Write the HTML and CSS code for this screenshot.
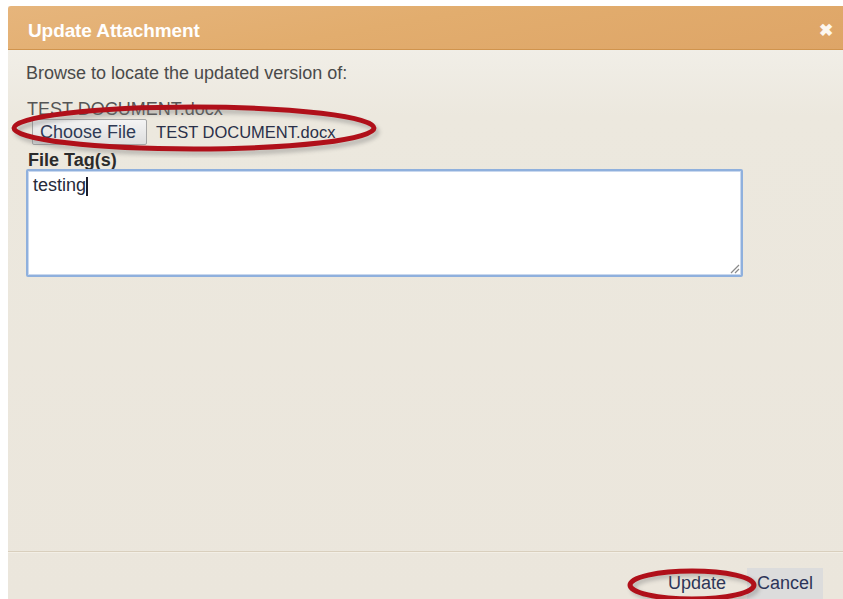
FILE: index.html
```html
<!DOCTYPE html>
<html lang="en">
<head>
<meta charset="utf-8">
<title>Update Attachment</title>
<link rel="stylesheet" href="styles.css">
</head>
<body>
<div class="dialog">
  <header class="titlebar">
    <span class="title">Update Attachment</span>
    <span class="close">&#x2716;</span>
  </header>
  <div class="content">
    <p class="intro">Browse to locate the updated version of:</p>
    <p class="current">TEST DOCUMENT.docx</p>
    <div class="file-row">
      <span class="file-btn">Choose File</span>
      <span class="file-name">TEST DOCUMENT.docx</span>
    </div>
    <div class="tag-label">File Tag(s)</div>
    <div class="textarea">
      <span class="value">testing</span><span class="caret"></span>
      <svg class="grip" width="12" height="12" viewBox="0 0 12 12">
        <path d="M11 3 L3 11 M11 7 L7 11" stroke="#8a8a8a" stroke-width="1.2" fill="none"/>
      </svg>
    </div>
  </div>
  <footer class="buttons">
    <span class="btn btn-update">Update</span>
    <span class="btn btn-cancel">Cancel</span>
  </footer>

  <!-- hand-drawn highlight rings -->
  <svg class="ring ring-file" width="390" height="64" viewBox="0 0 390 64">
    <defs><filter id="soft"><feGaussianBlur stdDeviation="2"/></filter></defs>
    <ellipse cx="188" cy="35" rx="180" ry="21" fill="none" stroke="#777" stroke-width="5" opacity="0.45" filter="url(#soft)"/>
    <ellipse cx="185" cy="31" rx="180" ry="21" fill="none" stroke="#b0101a" stroke-width="5"/>
  </svg>
  <svg class="ring ring-update" width="150" height="44" viewBox="0 0 150 44">
    <defs><filter id="soft2"><feGaussianBlur stdDeviation="2"/></filter></defs>
    <ellipse cx="70" cy="21" rx="62" ry="14" fill="none" stroke="#777" stroke-width="5" opacity="0.45" filter="url(#soft2)"/>
    <ellipse cx="67" cy="18" rx="62" ry="14" fill="none" stroke="#b0101a" stroke-width="5"/>
  </svg>
</div>
</body>
</html>
```

FILE: styles.css
```css
html, body {
  margin: 0;
  padding: 0;
  background: #ffffff;
  overflow: hidden;
}

body {
  width: 843px;
  height: 599px;
  font-family: "Liberation Sans", Arial, sans-serif;
}

.dialog {
  position: relative;
  margin: 6px 0 0 8px;
  width: 835px;
  height: 593px;
  display: flex;
  flex-direction: column;
  background: linear-gradient(to bottom, #f4f2ed 0px, #ece8de 110px, #ebe6dc 100%);
}

.titlebar {
  height: 43px;
  flex: none;
  display: flex;
  align-items: center;
  justify-content: space-between;
  padding: 0 10px 0 20px;
  background: linear-gradient(170deg, #e6b57c 0%, #e2ad6e 45%, #dea567 100%);
  border-bottom: 1px solid #d0944e;
  border-radius: 3px 0 0 0;
  color: #ffffff;
}

.title {
  font-size: 19px;
  font-weight: bold;
  letter-spacing: -0.1px;
  padding-top: 6px;
}

.close {
  font-size: 17px;
  font-weight: bold;
  color: #fdf7ef;
  padding-top: 6px;
}

.content {
  flex: 1;
  padding: 12px 0 0 18px;
  color: #4a4a4a;
}

.intro {
  margin: 0;
  font-size: 18px;
  line-height: 22px;
}

.current {
  margin: 14px 0 0 1px;
  font-size: 18px;
  line-height: 22px;
  color: #555555;
}

.file-row {
  display: flex;
  align-items: center;
  gap: 9px;
  margin: -1px 0 0 6px;
}

.file-btn {
  display: inline-flex;
  align-items: center;
  height: 24px;
  padding: 0 10px 0 7px;
  border: 1px solid #a6a6a6;
  border-radius: 2px;
  background: linear-gradient(to bottom, #f4f4f4, #dedede);
  font-size: 18px;
  color: #2f3a55;
}

.file-name {
  font-size: 16.5px;
  color: #2a3049;
}

.tag-label {
  margin: 6px 0 0 2px;
  font-size: 18px;
  line-height: 18px;
  font-weight: bold;
  color: #2b2b2b;
}

.textarea {
  position: relative;
  box-sizing: border-box;
  width: 717px;
  height: 108px;
  margin-top: 0;
  background: #ffffff;
  border: 2px solid #8fb0dd;
  border-radius: 2px;
  box-shadow: inset 0 0 0 1px #c9d8ee;
  padding: 3px 0 0 5px;
  font-size: 18px;
  line-height: 22px;
  color: #262a3a;
}

.caret {
  display: inline-block;
  width: 2px;
  height: 19px;
  background: #1d1d2b;
  vertical-align: -5px;
}

.grip {
  position: absolute;
  right: 1px;
  bottom: 1px;
}

.buttons {
  flex: none;
  height: 47px;
  border-top: 1px solid #d9cfbd;
  box-shadow: inset 0 1px 0 #f3efe6;
  display: flex;
  justify-content: flex-end;
  align-items: flex-end;
  padding-right: 20px;
}

.btn {
  display: inline-flex;
  align-items: center;
  justify-content: center;
  height: 31px;
  font-size: 18px;
  color: #2d3558;
}

.btn-update {
  width: 100px;
}

.btn-cancel {
  width: 76px;
  background: #dcdcdc;
}

.ring {
  position: absolute;
  pointer-events: none;
}

.ring-file {
  left: 1px;
  top: 91px;
}

.ring-update {
  left: 617px;
  top: 561px;
}
```
